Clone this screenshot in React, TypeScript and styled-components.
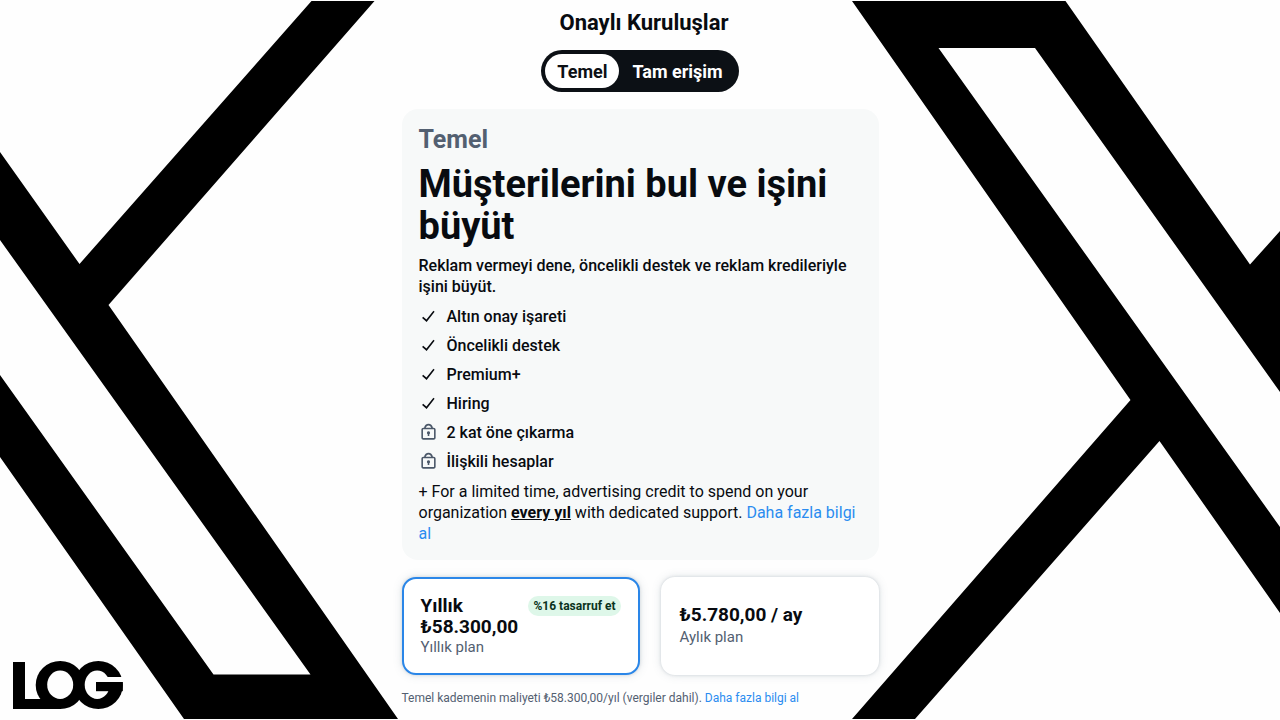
import React, { useState } from "react";
import styled, { createGlobalStyle } from "styled-components";

const GlobalStyle = createGlobalStyle`
  *, *::before, *::after { box-sizing: border-box; }
  body {
    margin: 0;
    background: #fefefe;
    color: #080b10;
    font-family: Roboto, "Liberation Sans", sans-serif;
    font-size: 16px;
    line-height: 21px;
  }
  h1, h2, p, ul { margin: 0; padding: 0; }
`;

const Page = styled.div`
  position: relative;
  min-height: 100vh;
  overflow: hidden;
`;

const Backdrop = styled.svg<{ $side: "left" | "right" }>`
  position: absolute;
  top: 0;
  ${(p) => p.$side}: 0;
  height: 100%;
`;

const Brand = styled.svg`
  position: absolute;
  left: 12px;
  bottom: 10px;
`;

const Column = styled.main`
  position: relative;
  display: flex;
  flex-direction: column;
  align-items: stretch;
  width: 100%;
  max-width: 477px;
  margin: 0 auto;
  padding: 9px 0 12px;
`;

const Title = styled.h1`
  padding-left: 8px;
  font-size: 22px;
  line-height: 28px;
  font-weight: 700;
  text-align: center;
`;

const Segments = styled.div`
  display: flex;
  gap: 1px;
  align-self: center;
  margin: 13px 0 17px;
  padding: 4px;
  border-radius: 21px;
  background: #0c1015;
`;

const Segment = styled.button<{ $active: boolean }>`
  height: 34px;
  padding: 0 12px;
  border: 0;
  border-radius: 17px;
  background: ${(p) => (p.$active ? "#fff" : "transparent")};
  color: ${(p) => (p.$active ? "#0c1015" : "#fff")};
  font: inherit;
  font-size: 18px;
  font-weight: 700;
  cursor: pointer;
`;

const Card = styled.section`
  display: flex;
  flex-direction: column;
  gap: 8px;
  padding: 16px 17px;
  border-radius: 16px;
  background: #f7f9f9;
`;

const Tier = styled.p`
  color: #536071;
  font-size: 25px;
  line-height: 30px;
  font-weight: 700;
`;

const Headline = styled.h2`
  font-size: 38px;
  line-height: 42px;
  font-weight: 700;
`;

const Lead = styled.p`
  font-weight: 500;
`;

const Features = styled.ul`
  display: flex;
  flex-direction: column;
  gap: 8px;
  && { padding: 1px 0; }
  list-style: none;
  font-weight: 500;
`;

const Feature = styled.li`
  display: flex;
  align-items: center;
  gap: 9px;
`;

const FeatureIcon = styled.svg<{ $muted?: boolean }>`
  width: 19px;
  height: 19px;
  fill: ${(p) => (p.$muted ? "#4a5768" : "#080b10")};
`;

const Strong = styled.strong`
  font-weight: 700;
  text-decoration: underline;
`;

const Link = styled.a`
  color: #2a8cf0;
  text-decoration: none;
`;

const Plans = styled.div`
  display: grid;
  grid-template-columns: 238fr 218fr;
  gap: 21px;
  margin-top: 17px;
`;

const Plan = styled.label<{ $selected: boolean }>`
  position: relative;
  display: flex;
  align-items: center;
  justify-content: space-between;
  height: 98px;
  padding: 0 17px;
  border: 2px solid ${(p) => (p.$selected ? "#2a86e8" : "#fff")};
  border-radius: 14px;
  background: #fff;
  box-shadow: 0 0 10px rgba(101, 119, 134, 0.2), 0 0 3px rgba(101, 119, 134, 0.25);
  cursor: pointer;
`;

const PlanRadio = styled.input`
  position: absolute;
  opacity: 0;
  pointer-events: none;
`;

const PlanText = styled.span<{ $gap?: number }>`
  display: flex;
  flex-direction: column;
  gap: ${(p) => p.$gap ?? 0}px;
`;

const Price = styled.span`
  font-size: 19px;
  font-weight: 700;
`;

const PlanNote = styled.span`
  color: #536071;
  font-size: 15px;
`;

const Saving = styled.span`
  align-self: flex-start;
  margin-top: 17px;
  padding: 0 5px;
  border-radius: 10px;
  background: #def7e9;
  color: #0a3320;
  font-size: 12px;
  line-height: 20px;
  font-weight: 700;
  white-space: nowrap;
`;

const FinePrint = styled.p`
  margin-top: 15px;
  color: #536071;
  font-size: 12px;
  line-height: 16px;
`;

const CheckIcon = () => (
  <FeatureIcon viewBox="0 0 24 24" aria-hidden="true">
    <path d="M9.640 19L3.900 13.990L5.250 12.400L9.400 15.900L18.200 4.700L19.700 5.850Z" />
  </FeatureIcon>
);

const LockIcon = () => (
  <FeatureIcon $muted viewBox="0 0 24 24" aria-hidden="true">
    <path
      fillRule="evenodd"
      d="M18.500 6H17.600C17 3 14.800 1 12 1S7 3 6.400 6H5.500C4.120 6 3 7.120 3 8.500v10C3 19.880 4.120 21 5.500 21h13c1.380 0 2.500-1.120 2.500-2.500v-10C21 7.120 19.880 6 18.500 6zM12 3c1.700 0 3 1.200 3.500 3h-7C9 4.200 10.300 3 12 3zM19 18.500c0 .28-.22.5-.5.5h-13c-.28 0-.5-.22-.5-.5v-10c0-.28.22-.5.5-.5h13c.28 0 .5.22.5.5v10zM12 10.500a2 2 0 0 0-1 3.730V16.500h2v-2.270A2 2 0 0 0 12 10.500z"
    />
  </FeatureIcon>
);

const features = [
  { label: "Altın onay işareti", locked: false },
  { label: "Öncelikli destek", locked: false },
  { label: "Premium+", locked: false },
  { label: "Hiring", locked: false },
  { label: "2 kat öne çıkarma", locked: true },
  { label: "İlişkili hesaplar", locked: true },
];

export default function App() {
  const [tier, setTier] = useState("Temel");
  const [plan, setPlan] = useState("yearly");

  return (
    <Page>
      <GlobalStyle />
      <Backdrop $side="left" viewBox="0 0 400 720" aria-hidden="true">
        <path
          fillRule="evenodd"
          d="M311.500 1H374.500L108.500 305L398 719H184L0 457V152L79.500 264ZM0 240V375L213.500 674.500H310.500Z"
        />
      </Backdrop>
      <Backdrop $side="right" viewBox="0 0 430 720" aria-hidden="true">
        <path
          fillRule="evenodd"
          d="M2 1H215.500L400 264.500L430 231V613L309.500 441L65 719H2L280.500 400ZM88.500 48L430 527V392L185 48Z"
        />
      </Backdrop>
      <Brand width="112" height="50" viewBox="0 0 112 50" role="img" aria-label="LOG">
        <rect x="1" y="2" width="12" height="47" />
        <rect x="1" y="39" width="48" height="10" />
        <ellipse cx="48.200" cy="25" rx="24.500" ry="24" />
        <ellipse cx="86.300" cy="25" rx="24.500" ry="24" />
        <ellipse cx="48.200" cy="24.800" rx="13" ry="14.200" fill="#fefefe" />
        <ellipse cx="85.200" cy="24.800" rx="12.500" ry="14.200" fill="#fefefe" />
        <rect x="95" y="17" width="17" height="5" fill="#fefefe" />
        <rect x="84" y="22" width="26.800" height="9.200" />
      </Brand>

      <Column>
        <Title>Onaylı Kuruluşlar</Title>
        <Segments>
          {["Temel", "Tam erişim"].map((name) => (
            <Segment
              key={name}
              type="button"
              $active={tier === name}
              aria-pressed={tier === name}
              onClick={() => setTier(name)}
            >
              {name}
            </Segment>
          ))}
        </Segments>

        <Card>
          <Tier>Temel</Tier>
          <Headline>Müşterilerini bul ve işini büyüt</Headline>
          <Lead>
            Reklam vermeyi dene, öncelikli destek ve reklam kredileriyle işini büyüt.
          </Lead>
          <Features>
            {features.map((f) => (
              <Feature key={f.label}>
                {f.locked ? <LockIcon /> : <CheckIcon />}
                {f.label}
              </Feature>
            ))}
          </Features>
          <p>
            + For a limited time, advertising credit to spend on your organization{" "}
            <Strong>every yıl</Strong> with dedicated support.{" "}
            <Link href="#credits">Daha fazla bilgi al</Link>
          </p>
        </Card>

        <Plans>
          <Plan $selected={plan === "yearly"}>
            <PlanRadio
              type="radio"
              name="plan"
              checked={plan === "yearly"}
              onChange={() => setPlan("yearly")}
            />
            <PlanText>
              <Price>Yıllık</Price>
              <Price>₺58.300,00</Price>
              <PlanNote>Yıllık plan</PlanNote>
            </PlanText>
            <Saving>%16 tasarruf et</Saving>
          </Plan>
          <Plan $selected={plan === "monthly"}>
            <PlanRadio
              type="radio"
              name="plan"
              checked={plan === "monthly"}
              onChange={() => setPlan("monthly")}
            />
            <PlanText $gap={2}>
              <Price>₺5.780,00 / ay</Price>
              <PlanNote>Aylık plan</PlanNote>
            </PlanText>
          </Plan>
        </Plans>

        <FinePrint>
          Temel kademenin maliyeti ₺58.300,00/yıl (vergiler dahil).{" "}
          <Link href="#pricing">Daha fazla bilgi al</Link>
        </FinePrint>
      </Column>
    </Page>
  );
}
